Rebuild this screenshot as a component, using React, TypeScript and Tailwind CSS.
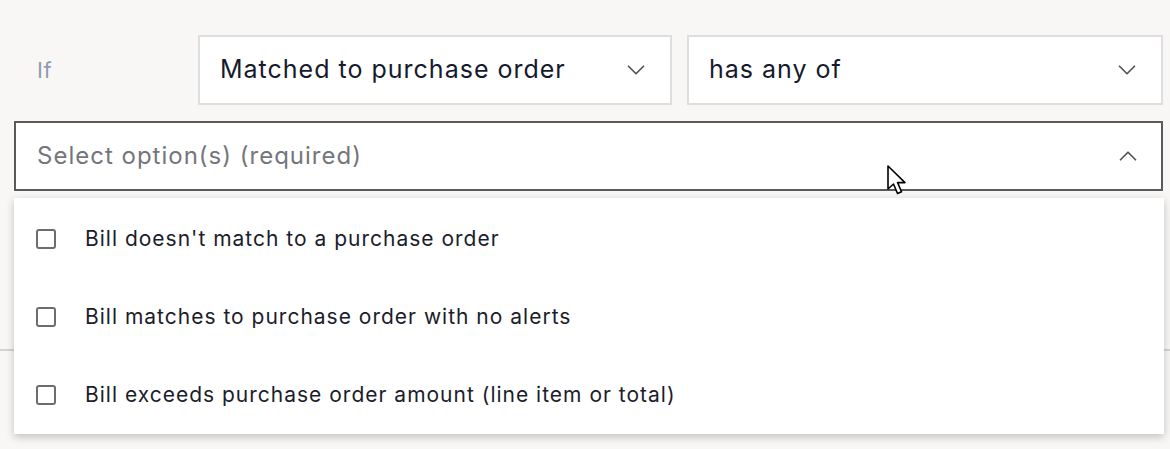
import { ChevronDown, ChevronUp } from "lucide-react";

const options = [
  "Bill doesn't match to a purchase order",
  "Bill matches to purchase order with no alerts",
  "Bill exceeds purchase order amount (line item or total)",
];

export default function App() {
  return (
    <div className="w-[1170px] h-[449px] overflow-hidden bg-[#f8f7f6] font-['Inter',sans-serif] relative">
      <div className="pt-[35px] pl-[14px] pr-[7px]">
        {/* Condition row */}
        <div className="flex items-center">
          <div className="w-[184px] pl-[23px] text-[22px] tracking-[0.5px] text-[#8d9cb0]">If</div>
          <div className="flex flex-1 gap-[15px]">
            <SelectBox label="Matched to purchase order" className="w-[474px]" />
            <SelectBox label="has any of" className="flex-1" />
          </div>
        </div>

        {/* Multi-select */}
        <div className="relative mt-[16px]">
          <div className="h-[70px] bg-white border-2 border-[#5a5a5a] flex items-center justify-between pl-[21px] pr-[18px]">
            <span className="text-[24px] tracking-[1px] text-[#74767c]">Select option(s) (required)</span>
            <ChevronUp className="size-[30px] text-[#555]" strokeWidth={1.4} />
          </div>

          {/* Dropdown */}
          <div className="absolute left-0 right-[-1px] top-[77px] z-10 bg-white shadow-[0_3px_8px_rgba(0,0,0,0.22)] pt-[2px]">
            {options.map((o) => (
              <div key={o} className="h-[78px] flex items-center pl-[22px] gap-[29px]">
                <span className="size-[20px] rounded-[3px] border-2 border-[#6d6d6d] bg-white shrink-0" />
                <span className="text-[21px] tracking-[1px] text-[#1b1d2b]">{o}</span>
              </div>
            ))}
          </div>
        </div>

        {/* Page separator behind the menu */}
        <div className="mt-[158px] h-[2px] bg-[#d3d3d3] -ml-[14px] -mr-[7px]" />
      </div>

      {/* Mouse cursor */}
      <svg className="absolute left-[886px] top-[165px] z-20" width="24" height="34" viewBox="0 0 24 34">
        <path
          d="M2 1 L2 24 L7.5 19 L11.5 28.5 L15.5 26.8 L11.6 17.6 L19 17.6 Z"
          fill="white"
          stroke="black"
          strokeWidth="1.6"
          strokeLinejoin="round"
        />
      </svg>
    </div>
  );
}

function SelectBox({ label, className = "" }: { label: string; className?: string }) {
  return (
    <div
      className={`h-[70px] bg-white border-2 border-[#dedede] flex items-center justify-between pl-[20px] pr-[19px] ${className}`}
    >
      <span className="text-[25px] tracking-[1px] text-[#161a2c]">{label}</span>
      <ChevronDown className="size-[30px] text-[#555]" strokeWidth={1.4} />
    </div>
  );
}
